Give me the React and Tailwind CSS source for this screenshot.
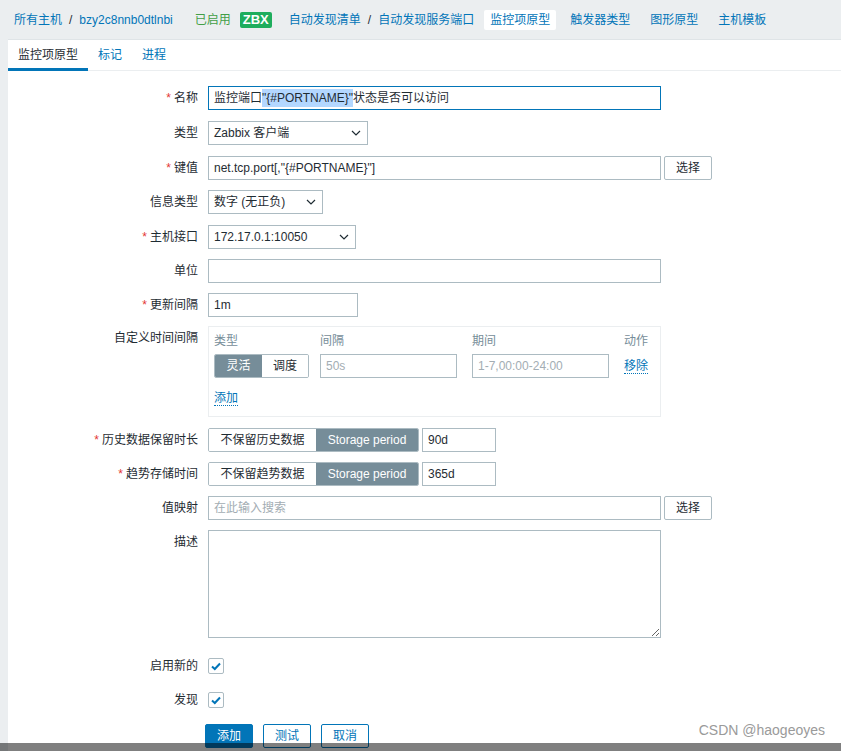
import React from "react";

const FONT = { fontFamily: '"Liberation Sans", Arial, "Noto Sans CJK SC", sans-serif' };

function Label({ req, children }) {
  return (
    <div className="w-[190px] shrink-0 text-right leading-[24px] text-[#1f2c33]">
      {req && <span className="text-[#e33734] mr-[3px]">*</span>}
      {children}
    </div>
  );
}

function Row({ label, req, className = "", children, top = false }) {
  return (
    <div className={`flex ${top ? "items-start" : "items-center"} gap-[10px] ${className}`}>
      <Label req={req}>{label}</Label>
      <div className="flex items-center gap-[3px]">{children}</div>
    </div>
  );
}

function Chevron() {
  return (
    <svg width="10" height="6" viewBox="0 0 10 6" className="shrink-0">
      <polyline points="1,1 5,5 9,1" fill="none" stroke="#1f2c33" strokeWidth="1.2" />
    </svg>
  );
}

function Select({ w, children }) {
  return (
    <div className={`${w} h-[24px] border border-[#acbbc2] bg-white flex items-center justify-between pl-[5px] pr-[6px] text-[#1f2c33]`}>
      <span>{children}</span>
      <Chevron />
    </div>
  );
}

function TextInput({ w, value, placeholder }) {
  return (
    <input
      readOnly
      defaultValue={value}
      placeholder={placeholder}
      className={`${w} h-[24px] border border-[#acbbc2] bg-white px-[5px] text-[12px] text-[#1f2c33] placeholder:text-[#a3adb3] outline-none`}
      style={FONT}
    />
  );
}

function SelectBtn() {
  return (
    <div className="w-[48px] h-[24px] border border-[#acbbc2] rounded-[2px] bg-white flex items-center justify-center text-[#1f2c33]">
      选择
    </div>
  );
}

function Checkbox() {
  return (
    <div className="w-[16px] h-[16px] border border-[#acbbc2] rounded-[2px] bg-white flex items-center justify-center">
      <svg width="12" height="12" viewBox="0 0 12 12">
        <polyline points="2,6.5 4.8,9 10,3.5" fill="none" stroke="#0275b8" strokeWidth="2" />
      </svg>
    </div>
  );
}

function Segment({ left, right, lw, rw, active }) {
  return (
    <div className="flex h-[24px] rounded-[2px] overflow-hidden border border-[#acbbc2]">
      <div
        className={`${lw} flex items-center justify-center ${
          active === 0 ? "bg-[#768d99] text-white" : "bg-white text-[#1f2c33]"
        }`}
      >
        {left}
      </div>
      <div
        className={`${rw} flex items-center justify-center ${
          active === 1 ? "bg-[#768d99] text-white" : "bg-white text-[#1f2c33]"
        }`}
      >
        {right}
      </div>
    </div>
  );
}

export default function App() {
  return (
    <div className="relative w-[841px] h-[751px] overflow-hidden bg-[#ebeef0] text-[12px]" style={FONT}>
      {/* top navigation */}
      <div className="h-[39px] flex items-center pl-[14px] pt-[1px] text-[#0275b8]">
        <span>所有主机</span>
        <span className="mx-[7px] text-[#1f2c33]">/</span>
        <span>bzy2c8nnb0dtlnbi</span>
        <span className="ml-[22px] text-[#429e47]">已启用</span>
        <span className="ml-[9px] h-[16px] px-[3px] flex items-center bg-[#1ead5d] text-white font-bold text-[13px] rounded-[2px]">
          ZBX
        </span>
        <span className="ml-[17px]">自动发现清单</span>
        <span className="mx-[7px] text-[#1f2c33]">/</span>
        <span>自动发现服务端口</span>
        <span className="ml-[10px] h-[20px] px-[6px] flex items-center bg-white rounded-[2px]">监控项原型</span>
        <span className="ml-[8px] px-[6px]">触发器类型</span>
        <span className="ml-[8px] px-[6px]">图形原型</span>
        <span className="ml-[8px] px-[6px]">主机模板</span>
      </div>

      {/* panel */}
      <div className="ml-[8px] bg-white border-t border-[#dfe4e7] h-[712px]">
        <div className="flex h-[31px] border-b border-[#ebeef0]">
          <div className="px-[10px] flex items-center border-b-[3px] border-[#0275b8] mb-[-1px] pt-[2px] text-[#1f2c33]">
            监控项原型
          </div>
          <div className="px-[10px] flex items-center pb-[1px] text-[#0275b8]">标记</div>
          <div className="px-[10px] flex items-center pb-[1px] text-[#0275b8]">进程</div>
        </div>

        <div className="pt-[15px] flex flex-col">
          <Row label="名称" req>
            <div className="w-[453px] h-[24px] border border-[#0275b8] flex items-center px-[5px] text-[#1f2c33] whitespace-nowrap">
              <span>监控端口</span>
              <span className="bg-[#b3d7ff]">"{"{#PORTNAME}"}"</span>
              <span>状态是否可以访问</span>
            </div>
          </Row>
          <Row label="类型" className="mt-[11px]">
            <Select w="w-[160px]">Zabbix 客户端</Select>
          </Row>
          <Row label="键值" req className="mt-[11px]">
            <TextInput w="w-[453px]" value={'net.tcp.port[,"{#PORTNAME}"]'} />
            <SelectBtn />
          </Row>
          <Row label="信息类型" className="mt-[10px]">
            <Select w="w-[115px]">数字 (无正负)</Select>
          </Row>
          <Row label="主机接口" req className="mt-[11px]">
            <Select w="w-[148px]">172.17.0.1:10050</Select>
          </Row>
          <Row label="单位" className="mt-[10px]">
            <TextInput w="w-[453px]" value="" />
          </Row>
          <Row label="更新间隔" req className="mt-[10px]">
            <TextInput w="w-[150px]" value="1m" />
          </Row>
          <Row label="自定义时间间隔" top className="mt-[9px]">
            <div className="w-[453px] border border-[#ebeef0] px-[5px] pt-[5px] pb-[9px]">
              <div className="flex leading-[18px] text-[#768d99]">
                <div className="w-[95px]">类型</div>
                <div className="w-[137px] ml-[11px]">间隔</div>
                <div className="w-[137px] ml-[15px]">期间</div>
                <div className="ml-[15px]">动作</div>
              </div>
              <div className="flex items-center mt-[4px]">
                <div className="w-[95px]">
                  <Segment left="灵活" right="调度" lw="w-[47px]" rw="w-[46px]" active={0} />
                </div>
                <div className="ml-[11px]">
                  <TextInput w="w-[137px]" placeholder="50s" />
                </div>
                <div className="ml-[15px]">
                  <TextInput w="w-[137px]" placeholder="1-7,00:00-24:00" />
                </div>
                <div className="ml-[15px]">
                  <span className="text-[#0275b8] border-b border-dotted border-[#0275b8]">移除</span>
                </div>
              </div>
              <div className="mt-[11px] leading-[18px]">
                <span className="text-[#0275b8] border-b border-dotted border-[#0275b8]">添加</span>
              </div>
            </div>
          </Row>
          <Row label="历史数据保留时长" req className="mt-[11px]">
            <Segment left="不保留历史数据" right="Storage period" lw="w-[107px]" rw="w-[102px]" active={1} />
            <TextInput w="w-[74px]" value="90d" />
          </Row>
          <Row label="趋势存储时间" req className="mt-[10px]">
            <Segment left="不保留趋势数据" right="Storage period" lw="w-[107px]" rw="w-[102px]" active={1} />
            <TextInput w="w-[74px]" value="365d" />
          </Row>
          <Row label="值映射" className="mt-[10px]">
            <TextInput w="w-[453px]" placeholder="在此输入搜索" />
            <SelectBtn />
          </Row>
          <Row label="描述" top className="mt-[10px]">
            <textarea
              readOnly
              className="w-[453px] h-[108px] border border-[#acbbc2] bg-white outline-none block"
            />
          </Row>
          <Row label="启用新的" className="mt-[16px]">
            <Checkbox />
          </Row>
          <Row label="发现" className="mt-[10px]">
            <Checkbox />
          </Row>
          <div className="flex gap-[10px] pl-[197px] mt-[12px]">
            <div className="w-[48px] h-[24px] rounded-[2px] bg-[#0275b8] border border-[#0275b8] text-white flex items-center justify-center">
              添加
            </div>
            <div className="w-[48px] h-[24px] rounded-[2px] bg-white border border-[#0275b8] text-[#0275b8] flex items-center justify-center">
              测试
            </div>
            <div className="w-[48px] h-[24px] rounded-[2px] bg-white border border-[#0275b8] text-[#0275b8] flex items-center justify-center">
              取消
            </div>
          </div>
        </div>
      </div>

      {/* watermark */}
      <div className="absolute right-[16px] bottom-[10px] text-[14px] text-[#9a9a9a]" style={{ fontFamily: '"Liberation Sans", Arial, sans-serif' }}>
        CSDN @haogeoyes
      </div>
      {/* bottom overlay bar */}
      <div className="absolute left-0 right-0 bottom-0 h-[8px] bg-black/50" />
    </div>
  );
}
